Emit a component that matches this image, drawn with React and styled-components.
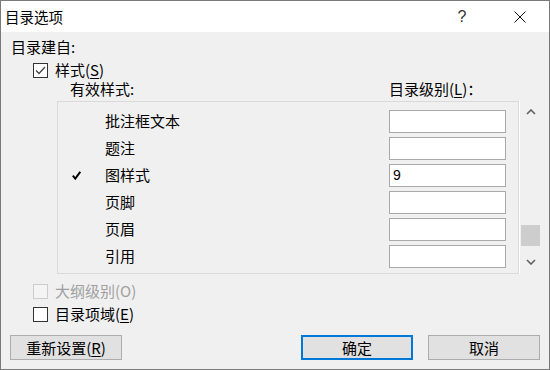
import React from "react";
import styled, { createGlobalStyle } from "styled-components";

const GlobalStyle = createGlobalStyle`
  html, body { margin: 0; padding: 0; background: #ffffff; }
  body { font-family: "Noto Sans CJK SC", "Noto Sans", sans-serif; }
  * { box-sizing: border-box; }
`;

const Window = styled.div`
  width: 550px;
  height: 370px;
  border: 1px solid #7a7a7a;
  display: flex;
  flex-direction: column;
  background: #f0f0f0;
  overflow: hidden;
`;

const TitleBar = styled.div`
  height: 31px;
  flex-shrink: 0;
  background: #ffffff;
  display: flex;
  align-items: center;
`;

const Title = styled.div`
  flex: 1;
  padding-left: 4px;
  font-size: 14.5px;
  line-height: 30px;
  color: #000;
`;

const TitleButton = styled.div`
  width: 58px;
  height: 31px;
  display: flex;
  align-items: center;
  justify-content: center;
  font-family: "Liberation Sans", "DejaVu Sans", sans-serif;
  font-size: 16px;
  color: #333333;
`;

const Body = styled.div`
  flex: 1;
  display: flex;
  flex-direction: column;
  padding: 5px 9px 0 9px;
  font-size: 15px;
  color: #000;
`;

const SectionLabel = styled.div`
  height: 20px;
  line-height: 19px;
  padding-left: 1px;
`;

const CheckRow = styled.label`
  display: flex;
  align-items: center;
  height: 20px;
  margin-top: ${(p) => p.$top}px;
  padding-left: 23px;
  gap: 7px;
  line-height: 18px;
  color: ${(p) => (p.$disabled ? "#a0a0a0" : "#000")};
`;

const Box = styled.span`
  width: 15px;
  height: 15px;
  flex-shrink: 0;
  border: 1px solid ${(p) => (p.$disabled ? "#cccccc" : "#333333")};
  background: ${(p) => (p.$disabled ? "#f4f4f4" : "#ffffff")};
  display: flex;
  align-items: center;
  justify-content: center;
`;

const HeaderRow = styled.div`
  display: flex;
  height: 20px;
  line-height: 18px;
  padding-left: 60px;
`;

const HeaderCell = styled.div`
  width: ${(p) => (p.$w ? `${p.$w}px` : "auto")};
`;

const ListArea = styled.div`
  display: flex;
  height: 173px;
  margin-top: 1px;
  margin-left: 47px;
`;

const ListBox = styled.div`
  flex: 1;
  border: 1px solid #dadada;
  padding: 6px 12px 0 0;
  display: flex;
  flex-direction: column;
`;

const ListRow = styled.div`
  display: grid;
  grid-template-columns: 47px 1fr 117px;
  align-items: center;
  height: 27px;
`;

const MarkCell = styled.div`
  padding-left: 14px;
  display: flex;
  align-items: center;
  height: 100%;
`;

const NameCell = styled.div`
  line-height: 18px;
  padding-bottom: 2px;
`;

const LevelInput = styled.div`
  height: 23px;
  border: 1px solid #a9a9a9;
  background: #ffffff;
  font-family: "Liberation Sans", Arial, sans-serif;
  font-size: 14px;
  line-height: 21px;
  padding-left: 3px;
  color: #000;
`;

const ScrollBar = styled.div`
  width: 21px;
  display: flex;
  flex-direction: column;
  border-left: 1px solid #ffffff;
`;

const ScrollArrow = styled.div`
  height: ${(p) => p.$h}px;
  display: flex;
  align-items: center;
  justify-content: center;
  flex-shrink: 0;
  padding-left: 1px;
`;

const ScrollTrack = styled.div`
  flex: 1;
  padding: 0 0 0 1px;
`;

const ScrollThumb = styled.div`
  width: 19px;
  height: 21px;
  background: #cdcdcd;
`;

const ButtonRow = styled.div`
  display: flex;
  margin-top: 11px;
  gap: 15px;
`;

const Spacer = styled.div`
  flex: 1;
`;

const Button = styled.div`
  width: 112px;
  height: 25px;
  background: #e1e1e1;
  border: ${(p) => (p.$primary ? "2px solid #0078d7" : "1px solid #adadad")};
  display: flex;
  align-items: center;
  justify-content: center;
  font-size: 15px;
  line-height: 19px;
  color: #000;
`;

const Key = styled.span`
  text-decoration: underline;
  text-underline-offset: 2px;
`;

const CheckGlyph = () => (
  <svg width="11" height="9" viewBox="0 0 11 9">
    <polyline points="1,4.5 4,7.5 10,1" fill="none" stroke="#444" strokeWidth="1.3" />
  </svg>
);

const ListMark = () => (
  <svg width="9" height="9" viewBox="0 0 9 9">
    <path d="M0.8 4.6 L3.3 7.6 L8.3 0.8" fill="none" stroke="#000" strokeWidth="2" />
  </svg>
);

const Chevron = ({ up }) => (
  <svg width="10" height="6" viewBox="0 0 10 6">
    <polyline
      points={up ? "1,5 5,1 9,5" : "1,1 5,5 9,1"}
      fill="none"
      stroke="#606060"
      strokeWidth="1.6"
    />
  </svg>
);

const CloseIcon = () => (
  <svg width="12" height="12" viewBox="0 0 12 12">
    <path d="M0.5 0.5 L11.5 11.5 M11.5 0.5 L0.5 11.5" stroke="#111" strokeWidth="1" />
  </svg>
);

const rows = [
  { name: "批注框文本", level: "" },
  { name: "题注", level: "" },
  { name: "图样式", level: "9", marked: true },
  { name: "页脚", level: "" },
  { name: "页眉", level: "" },
  { name: "引用", level: "" },
];

export default function App() {
  const thumbOffset = 103;
  return (
    <>
      <GlobalStyle />
      <Window>
        <TitleBar>
          <Title>目录选项</Title>
          <TitleButton>?</TitleButton>
          <TitleButton>
            <CloseIcon />
          </TitleButton>
        </TitleBar>
        <Body>
          <SectionLabel>目录建自:</SectionLabel>
          <CheckRow $top={3}>
            <Box>
              <CheckGlyph />
            </Box>
            <span>
              样式(<Key>S</Key>)
            </span>
          </CheckRow>
          <HeaderRow>
            <HeaderCell $w={319}>有效样式:</HeaderCell>
            <HeaderCell>
              目录级别(<Key>L</Key>)：
            </HeaderCell>
          </HeaderRow>
          <ListArea>
            <ListBox>
              {rows.map((r) => (
                <ListRow key={r.name}>
                  <MarkCell>{r.marked ? <ListMark /> : null}</MarkCell>
                  <NameCell>{r.name}</NameCell>
                  <LevelInput>{r.level}</LevelInput>
                </ListRow>
              ))}
            </ListBox>
            <ScrollBar>
              <ScrollArrow $h={21}>
                <Chevron up />
              </ScrollArrow>
              <ScrollTrack>
                <ScrollThumb style={{ marginTop: thumbOffset }} />
              </ScrollTrack>
              <ScrollArrow $h={25}>
                <Chevron />
              </ScrollArrow>
            </ScrollBar>
          </ListArea>
          <CheckRow $top={7} $disabled>
            <Box $disabled />
            <span>大纲级别(O)</span>
          </CheckRow>
          <CheckRow $top={3}>
            <Box />
            <span>
              目录项域(<Key>E</Key>)
            </span>
          </CheckRow>
          <ButtonRow>
            <Button>
              <span>
                重新设置(<Key>R</Key>)
              </span>
            </Button>
            <Spacer />
            <Button $primary>确定</Button>
            <Button>取消</Button>
          </ButtonRow>
        </Body>
      </Window>
    </>
  );
}
